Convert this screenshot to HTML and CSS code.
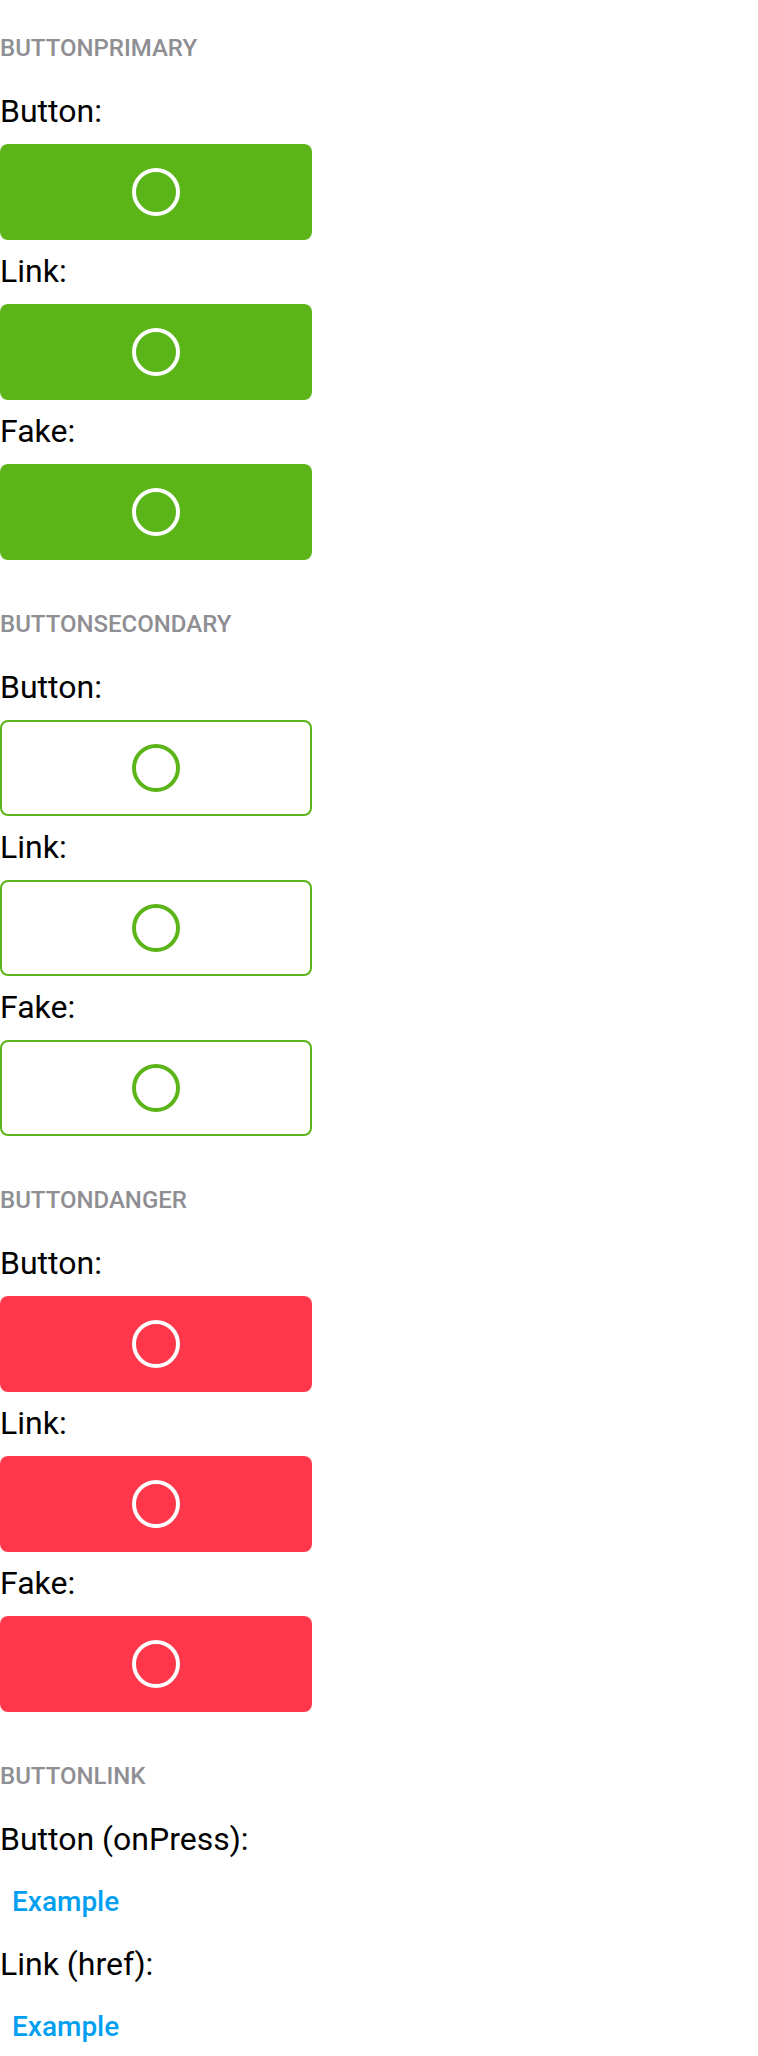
FILE: index.html
```html
<!DOCTYPE html>
<html lang="en">
<head>
<meta charset="utf-8">
<title>Buttons</title>
<link rel="stylesheet" href="styles.css">
</head>
<body>
<main class="page">
  <section class="group">
    <h2 class="group-title">BUTTONPRIMARY</h2>
    <div class="label">Button:</div>
    <button class="btn btn-primary" type="button"><svg class="spinner" viewBox="0 0 48 48"><circle cx="24" cy="24" r="22"/></svg></button>
    <div class="label">Link:</div>
    <a class="btn btn-primary" href="#"><svg class="spinner" viewBox="0 0 48 48"><circle cx="24" cy="24" r="22"/></svg></a>
    <div class="label">Fake:</div>
    <div class="btn btn-primary"><svg class="spinner" viewBox="0 0 48 48"><circle cx="24" cy="24" r="22"/></svg></div>
  </section>
  <section class="group">
    <h2 class="group-title">BUTTONSECONDARY</h2>
    <div class="label">Button:</div>
    <button class="btn btn-secondary" type="button"><svg class="spinner" viewBox="0 0 48 48"><circle cx="24" cy="24" r="22"/></svg></button>
    <div class="label">Link:</div>
    <a class="btn btn-secondary" href="#"><svg class="spinner" viewBox="0 0 48 48"><circle cx="24" cy="24" r="22"/></svg></a>
    <div class="label">Fake:</div>
    <div class="btn btn-secondary"><svg class="spinner" viewBox="0 0 48 48"><circle cx="24" cy="24" r="22"/></svg></div>
  </section>
  <section class="group">
    <h2 class="group-title">BUTTONDANGER</h2>
    <div class="label">Button:</div>
    <button class="btn btn-danger" type="button"><svg class="spinner" viewBox="0 0 48 48"><circle cx="24" cy="24" r="22"/></svg></button>
    <div class="label">Link:</div>
    <a class="btn btn-danger" href="#"><svg class="spinner" viewBox="0 0 48 48"><circle cx="24" cy="24" r="22"/></svg></a>
    <div class="label">Fake:</div>
    <div class="btn btn-danger"><svg class="spinner" viewBox="0 0 48 48"><circle cx="24" cy="24" r="22"/></svg></div>
  </section>
  <section class="group">
    <h2 class="group-title">BUTTONLINK</h2>
    <div class="label">Button (onPress):</div>
    <button class="btn-link" type="button">Example</button>
    <div class="label">Link (href):</div>
    <a class="btn-link" href="#">Example</a>
  </section>
</main>
</body>
</html>
```
FILE: styles.css
```css
body {
  margin: 0;
  background: #fff;
  color: #000;
  font-family: Roboto, "Liberation Sans", sans-serif;
}

.page {
  display: flex;
  flex-direction: column;
  gap: 48px;
  padding-top: 32px;
  width: 312px;
}

.group {
  display: flex;
  flex-direction: column;
}

.group-title {
  margin: 0 0 16px;
  font-size: 24px;
  font-weight: 500;
  line-height: 32px;
  color: #8e8e93;
}

.label {
  font-size: 32px;
  line-height: 40px;
  padding: 11px 0 13px;
}

.btn {
  display: flex;
  align-items: center;
  justify-content: center;
  box-sizing: border-box;
  width: 312px;
  height: 96px;
  margin: 0;
  padding: 0;
  border: 0;
  border-radius: 8px;
  text-decoration: none;
  font: inherit;
}

.spinner {
  width: 48px;
  height: 48px;
  display: block;
}

.spinner circle {
  fill: none;
  stroke-width: 4;
}

.btn-primary {
  background: #5cb518;
}

.btn-primary .spinner circle,
.btn-danger .spinner circle {
  stroke: #fff;
}

.btn-secondary {
  background: #fff;
  border: 2px solid #5cb518;
}

.btn-secondary .spinner circle {
  stroke: #5cb518;
}

.btn-danger {
  background: #ff374b;
}

.btn-link {
  align-self: flex-start;
  margin: 0;
  padding: 13px 12px 15px;
  border: 0;
  background: none;
  font-family: Roboto, "Liberation Sans", sans-serif;
  font-size: 28px;
  font-weight: 500;
  line-height: normal;
  color: #009ff0;
  text-decoration: none;
}
```
